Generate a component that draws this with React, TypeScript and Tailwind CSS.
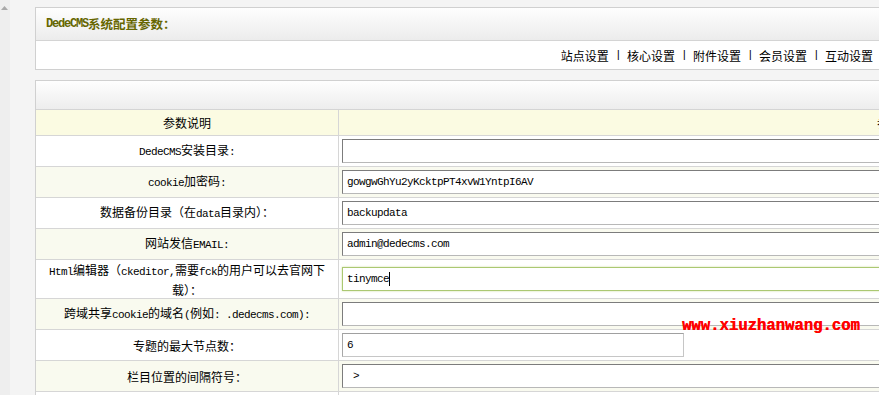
import React from "react";

const rows = [
  { label: "DedeCMS安装目录:", value: "" },
  { label: "cookie加密码:", value: "gowgwGhYu2yKcktpPT4xvW1YntpI6AV" },
  { label: "数据备份目录（在data目录内）：", value: "backupdata" },
  { label: "网站发信EMAIL:", value: "admin@dedecms.com" },
  { label: "Html编辑器（ckeditor,需要fck的用户可以去官网下载）：", value: "tinymce", focus: true, tall: true },
  { label: "跨域共享cookie的域名(例如: .dedecms.com):", value: "" },
  { label: "专题的最大节点数：", value: "6", short: true },
  { label: "栏目位置的间隔符号：", value: " > " },
  { label: "附件保存目录：", value: "/uploads" },
];

// half-width runs get the narrow mono face, like SimSun's latin
function Mixed({ text, big }: { text: string; big?: boolean }) {
  const parts = text.split(/([\x20-\x7e]+)/).filter((p) => p !== "");
  return (
    <>
      {parts.map((p, i) =>
        /^[\x20-\x7e]+$/.test(p) ? (
          <span
            key={i}
            className={
              big
                ? "font-['Liberation_Mono',monospace] text-[12px] tracking-[-1.2px] whitespace-pre"
                : "font-['Liberation_Mono',monospace] text-[11px] tracking-[-0.6px] whitespace-pre"
            }
          >
            {p}
          </span>
        ) : (
          <span key={i}>{p}</span>
        )
      )}
    </>
  );
}

function Field({ value, focus, short }: { value: string; focus?: boolean; short?: boolean }) {
  const border = focus
    ? "border-[#abc872] shadow-[0_0_2px_#cfe0a6]"
    : short
      ? "border-[#c6c6c6] border-t-[#a0a0a0] border-l-[#a8a8a8]"
      : "border-[#b8b8b8] border-t-[#7c7c7c] border-l-[#7c7c7c]";
  return (
    <div className={`h-[24px] ${short ? "w-[342px]" : "w-[580px]"} bg-white border ${border} flex items-center pl-[4px]`}>
      <span className="font-['Liberation_Mono',monospace] text-[11px] tracking-[-0.6px] whitespace-pre text-black">{value}</span>
      {focus && <span className="w-px h-[14px] bg-black" />}
    </div>
  );
}

export default function App() {
  return (
    <div className="relative w-[879px] h-[395px] overflow-hidden bg-[#f4f4f4] flex font-['Noto_Sans_CJK_SC',sans-serif] text-[12px] text-black">
      {/* left frame strip */}
      <div className="w-[10px] shrink-0 bg-[#eeeeee] pt-[6px] pl-[1px]">
        <svg width="7" height="4" viewBox="0 0 7 4">
          <path d="M3.5 0L7 4H0z" fill="#a9a9a9" />
        </svg>
      </div>

      <div className="ml-[25px] pt-[7px] w-[900px] shrink-0">
        {/* title box */}
        <div className="border border-[#d0d0d0] bg-white">
          <div className="h-[33px] flex items-center pl-[10px] border-b border-[#d4d4d4] bg-linear-to-b from-[#fefefe] to-[#ececec] font-bold text-[#666600] text-[12.5px]">
            <Mixed text="DedeCMS系统配置参数：" big />
          </div>
          <div className="h-[28px] flex items-center justify-end pr-[61px] leading-[17px]">
            <Mixed text="站点设置 | 核心设置 | 附件设置 | 会员设置 | 互动设置" />
          </div>
        </div>

        {/* config table */}
        <div className="mt-[10px] border border-[#d0d0d0] bg-white">
          <div className="h-[29px] border-b border-[#d4d4d4] bg-linear-to-b from-[#fefefe] to-[#ededed]" />
          <div className="h-[26px] flex border-b border-[#d6d6d6] bg-[#fbfbe2] leading-[17px]">
            <div className="w-[303px] border-r border-[#d6d6d6] flex items-center justify-center">参数说明</div>
            <div className="flex-1 flex items-center pl-[538px]">参数值</div>
          </div>
          {rows.map((r, i) => (
            <div
              key={i}
              className={`flex border-b border-[#d6d6d6] ${r.tall ? "h-[39px]" : "h-[31px]"} ${i % 2 === 1 ? "bg-[#f9faef]" : "bg-white"}`}
            >
              <div className="w-[303px] border-r border-[#d6d6d6] flex items-center justify-center text-center px-[8px] leading-[17px]">
                <div>
                  <Mixed text={r.label} />
                </div>
              </div>
              <div className="flex-1 flex items-center pl-[3px]">
                <Field value={r.value} focus={r.focus} short={r.short} />
              </div>
            </div>
          ))}
        </div>
      </div>

      {/* watermark */}
      <div className="absolute left-[682px] top-[316px] font-['Liberation_Mono',monospace] font-bold text-[15.6px] text-[#ff0000] leading-[20px] [text-shadow:0.4px_0_0_#ff0000]">
        www.xiuzhanwang.com
      </div>
    </div>
  );
}
